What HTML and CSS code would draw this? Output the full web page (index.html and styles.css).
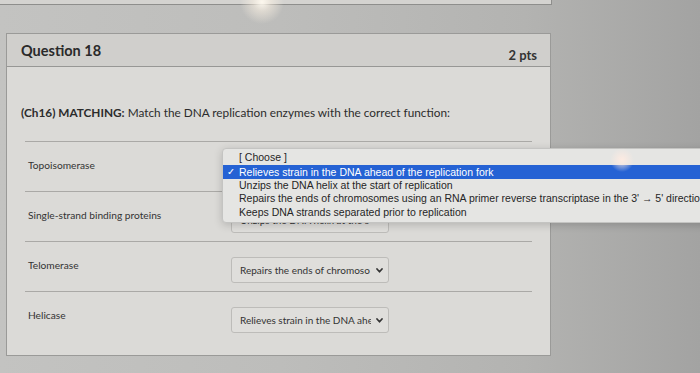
FILE: index.html
```html
<!DOCTYPE html>
<html lang="en">
<head>
  <meta charset="UTF-8" />
  <meta name="viewport" content="width=device-width, initial-scale=1.0" />
  <title>Question 18</title>
  <link rel="stylesheet" href="styles.css">
</head>
<body>
  <div class="prev-card"></div>
  <section class="question">
    <header class="question-header">
      <h2>Question 18</h2>
      <span class="pts">2 pts</span>
    </header>
    <div class="question-body">
      <p class="prompt"><strong>(Ch16) MATCHING:</strong> Match the DNA replication enzymes with the correct function:</p>
      <ul class="matches">
        <li class="match">
          <span class="term">Topoisomerase</span>
          <div class="select">
            <span class="select-value">Relieves strain in the DNA ahe</span>
            <svg class="chevron" viewBox="0 0 7 5" width="7" height="5"><path d="M1 1 L3.5 3.8 L6 1" /></svg>
          </div>
        </li>
        <li class="match">
          <span class="term">Single-strand binding proteins</span>
          <div class="select">
            <span class="select-value">Unzips the DNA helix at the s</span>
            <svg class="chevron" viewBox="0 0 7 5" width="7" height="5"><path d="M1 1 L3.5 3.8 L6 1" /></svg>
          </div>
        </li>
        <li class="match">
          <span class="term">Telomerase</span>
          <div class="select">
            <span class="select-value">Repairs the ends of chromoso</span>
            <svg class="chevron" viewBox="0 0 7 5" width="7" height="5"><path d="M1 1 L3.5 3.8 L6 1" /></svg>
          </div>
        </li>
        <li class="match">
          <span class="term">Helicase</span>
          <div class="select">
            <span class="select-value">Relieves strain in the DNA ahe</span>
            <svg class="chevron" viewBox="0 0 7 5" width="7" height="5"><path d="M1 1 L3.5 3.8 L6 1" /></svg>
          </div>
        </li>
      </ul>
    </div>
  </section>

  <!-- open native popup of the first select -->
  <ul class="popup">
    <li class="popup-item">[ Choose ]</li>
    <li class="popup-item selected"><span class="check">✓</span>Relieves strain in the DNA ahead of the replication fork</li>
    <li class="popup-item">Unzips the DNA helix at the start of replication</li>
    <li class="popup-item">Repairs the ends of chromosomes using an RNA primer reverse transcriptase in the 3' → 5' direction</li>
    <li class="popup-item">Keeps DNA strands separated prior to replication</li>
  </ul>
  <div class="glare"></div>
</body>
</html>
```

FILE: styles.css
```css
:root {
  --card: #dbdad7;
  --card-head: #d0cfcc;
  --line: #aaa9a6;
  --text: #2c2c2c;
  --blue: #2562d4;
}
html, body {
  margin: 0;
  padding: 0;
}
body {
  width: 700px;
  height: 373px;
  overflow: hidden;
  position: relative;
  font-family: 'Lato', 'Liberation Sans', sans-serif;
  color: var(--text);
  background: linear-gradient(90deg, #c3c3c1 0%, #bdbdbb 40%, #b3b3b1 75%, #a3a3a2 100%);
}
.prev-card {
  width: 551px;
  height: 4px;
  background: #d4d3d0;
  border-bottom: 1px solid #8e8e8c;
  border-right: 1px solid #8e8e8c;
}
.question {
  width: 543px;
  margin: 28px 0 0 6px;
  background: var(--card);
  border: 1px solid #9a9a98;
}
.question-header {
  display: flex;
  justify-content: space-between;
  align-items: flex-start;
  height: 32px;
  padding: 0 13px 0 14px;
  background: var(--card-head);
  border-bottom: 1px solid #979795;
}
.question-header h2 {
  margin: 8px 0 0 0;
  font-size: 14.5px;
  font-weight: 700;
  color: #2a2a2a;
}
.pts {
  margin-top: 13px;
  font-size: 13px;
  font-weight: 700;
  color: #333;
}
.question-body {
  padding: 38px 18px 14px 14px;
}
.prompt {
  margin: 0 0 20px 0;
  font-size: 11.8px;
  line-height: 16px;
  color: #2c2c2c;
}
.prompt strong {
  font-weight: 700;
}
.matches {
  list-style: none;
  margin: 0 0 0 4px;
  padding: 0;
}
.match {
  display: grid;
  grid-template-columns: 203px 158px;
  align-items: start;
  height: 50px;
  box-sizing: border-box;
  padding: 15px 0 0 3px;
  border-top: 1px solid var(--line);
}
.term {
  padding-top: 2px;
  font-size: 10.2px;
  color: #333;
}
.select {
  display: flex;
  align-items: center;
  height: 26px;
  box-sizing: border-box;
  padding: 0 5px 0 8px;
  background: #dfdedb;
  border: 1px solid #bdbcb9;
  border-radius: 3px;
}
.select-value {
  font-size: 10px;
  color: #333;
  white-space: nowrap;
  overflow: hidden;
  width: 131px;
}
.chevron {
  margin-left: auto;
  fill: none;
  stroke: #333;
  stroke-width: 1.7;
  stroke-linecap: round;
  stroke-linejoin: round;
}
/* native popup */
.popup {
  position: absolute;
  left: 222px;
  top: 148px;
  width: 500px;
  margin: 0;
  padding: 2px 0 3px 0;
  list-style: none;
  background: #e5e5e3;
  border: 1px solid #c4c4c2;
  border-radius: 4px;
  box-shadow: 0 2px 8px rgba(0,0,0,0.18);
  font-family: 'Liberation Sans', 'DejaVu Sans', sans-serif;
  font-size: 10.5px;
}
.popup-item {
  height: 13.5px;
  line-height: 13.5px;
  padding-left: 16px;
  white-space: nowrap;
  color: #262626;
}
.popup-item.selected {
  position: relative;
  background: var(--blue);
  color: #fff;
  height: 14px;
  line-height: 14px;
}
.check {
  position: absolute;
  left: 4px;
  font-size: 9.5px;
}
.glare {
  position: absolute;
  inset: 0;
  pointer-events: none;
  background:
    radial-gradient(circle at 262px 2px, rgba(255,250,240,0.95) 0, rgba(255,245,230,0.5) 9px, rgba(255,255,255,0) 22px),
    radial-gradient(circle at 622px 160px, rgba(255,235,225,0.95) 0, rgba(255,235,225,0.55) 5px, rgba(255,255,255,0) 12px);
}
```
